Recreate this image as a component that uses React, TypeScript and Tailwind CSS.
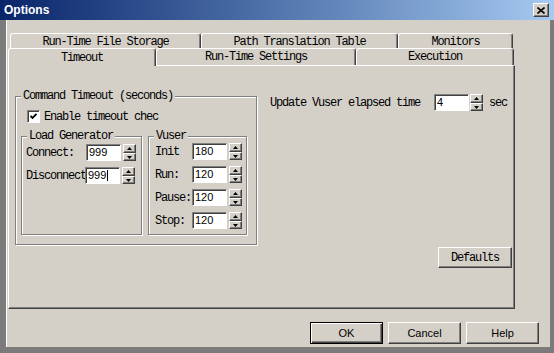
const mono = "font-[family-name:'Liberation_Mono',monospace] text-[12px] leading-[12px] tracking-[-1.2px] text-black";
const sans = "font-[family-name:'Liberation_Sans',Arial,sans-serif]";
const raised =
  "border border-t-white border-l-white border-r-[#404040] border-b-[#404040] bg-[#d4d0c8] shadow-[inset_-1px_-1px_0_#808080]";

function SpinHalf({ up }: { up?: boolean }) {
  return (
    <div className={`flex items-center justify-center ${raised} ${up ? "h-[9px]" : "h-[8px]"}`}>
      <svg width="5" height="3" viewBox="0 0 5 3">
        <path d={up ? "M2.5 0L5 3H0Z" : "M0 0H5L2.5 3Z"} fill="#000" />
      </svg>
    </div>
  );
}

function Spin() {
  return (
    <div className="flex h-[17px] w-[13px] flex-col">
      <SpinHalf up />
      <SpinHalf />
    </div>
  );
}

function Field({ value, caret }: { value: string; caret?: boolean }) {
  return (
    <div
      className={`flex h-[17px] w-[35px] items-center border border-t-[#808080] border-l-[#808080] border-r-white border-b-white bg-white pl-[2px] text-[11px] leading-[11px] text-black shadow-[inset_1px_1px_0_#404040] ${sans}`}
    >
      {value}
      {caret && <span className="ml-[1px] h-[11px] w-[1px] bg-black" />}
    </div>
  );
}

function Group({ label, className, children }: { label: string; className?: string; children?: React.ReactNode }) {
  return (
    <div className={`border border-[#808080] shadow-[inset_1px_1px_0_#fff,1px_1px_0_#fff] ${className ?? ""}`}>
      <div className={`-mt-[7px] ml-[5px] w-fit bg-[#d4d0c8] px-[2px] ${mono}`}>{label}</div>
      {children}
    </div>
  );
}

function Row({ label, labelW, value, caret, pl }: { label: string; labelW: string; value: string; caret?: boolean; pl: string }) {
  return (
    <div className={`flex h-[17px] items-center ${pl}`}>
      <div className={`overflow-hidden whitespace-nowrap ${labelW} ${mono}`}>{label}</div>
      <Field value={value} caret={caret} />
      <div className="ml-[2px]">
        <Spin />
      </div>
    </div>
  );
}

function Tab({ label, w, h = "h-[16px]", className }: { label: string; w: string; h?: string; className?: string }) {
  return (
    <div
      className={`flex items-center justify-center rounded-t-[3px] border-t border-l border-r border-t-white border-l-white border-r-[#404040] shadow-[inset_-1px_0_0_#808080] ${w} ${h} ${className ?? ""}`}
    >
      <span className={mono}>{label}</span>
    </div>
  );
}

function Button({ label, primary }: { label: string; primary?: boolean }) {
  return (
    <div
      className={`flex h-[22px] w-[73px] items-center justify-center text-[11px] text-black ${sans} ${
        primary
          ? "border border-black bg-[#d4d0c8] shadow-[inset_1px_1px_0_#fff,inset_-1px_-1px_0_#404040,inset_-2px_-2px_0_#808080]"
          : raised
      }`}
    >
      {label}
    </div>
  );
}

export default function App() {
  return (
    <div className="flex h-[353px] w-[554px] flex-col overflow-hidden bg-[#7b7b7b]">
      {/* title bar */}
      <div className="flex h-[20px] shrink-0 items-center justify-between bg-linear-to-r from-[#0a246a] to-[#a6caf0] pl-[4px] pr-[5px]">
        <span className={`text-[12px] font-bold text-white ${sans}`}>Options</span>
        <div className={`flex h-[14px] w-[16px] items-center justify-center ${raised}`}>
          <svg width="8" height="7" viewBox="0 0 8 7">
            <path d="M0.5 0.5L7.5 6.5M7.5 0.5L0.5 6.5" stroke="#000" strokeWidth="1.6" />
          </svg>
        </div>
      </div>

      <div className="mb-[6px] ml-[6px] mr-[4px] flex flex-1 flex-col border-l border-white bg-[#d4d0c8] pt-[12px]">
        <div className="ml-[1px] flex flex-col">
          {/* back tab row */}
          <div className="ml-[2px] flex h-[16px] pt-[1px]">
            <Tab label="Run-Time File Storage" w="w-[191px]" />
            <Tab label="Path Translation Table" w="w-[197px]" />
            <Tab label="Monitors" w="w-[115px]" />
          </div>
          {/* front tab row */}
          <div className="flex h-[17px] items-start">
            <Tab label="Timeout" w="w-[148px]" h="h-[18px]" className="relative z-10 -mb-[1px] bg-[#d4d0c8]" />
            <Tab label="Run-Time Settings" w="w-[200px]" h="h-[17px]" />
            <Tab label="Execution" w="w-[158px]" h="h-[17px]" />
          </div>

          {/* panel */}
          <div className="flex h-[244px] w-[507px] border border-t-white border-l-white border-r-[#404040] border-b-[#404040] shadow-[inset_-1px_-1px_0_#808080]">
            <Group label="Command Timeout (seconds)" className="ml-[6px] mt-[30px] h-fit w-[242px] pb-[9px]">
              <div className="ml-[11px] mt-[8px] flex h-[13px] items-center">
                <div className="flex h-[13px] w-[13px] items-center justify-center border border-t-[#808080] border-l-[#808080] border-r-white border-b-white bg-white shadow-[inset_1px_1px_0_#404040]">
                  <svg width="7" height="7" viewBox="0 0 7 7">
                    <path d="M0.5 3L2.5 5L6.5 1" stroke="#000" strokeWidth="1.8" fill="none" />
                  </svg>
                </div>
                <span className={`ml-[4px] ${mono}`}>Enable timeout chec</span>
              </div>
              <div className="ml-[5px] mt-[13px] flex gap-[6px]">
                <Group label="Load Generator" className="h-[99px] w-[121px]">
                  <div className="mt-[2px] flex flex-col gap-[6px]">
                    <Row label="Connect:" labelW="w-[60px]" value="999" pl="pl-[4px]" />
                    <Row label="Disconnect" labelW="w-[59px]" value="999" caret pl="pl-[4px]" />
                  </div>
                </Group>
                <Group label="Vuser" className="h-[99px] w-[99px]">
                  <div className="mt-[1px] flex flex-col gap-[6px]">
                    <Row label="Init" labelW="w-[37px]" value="180" pl="pl-[6px]" />
                    <Row label="Run:" labelW="w-[37px]" value="120" pl="pl-[6px]" />
                    <Row label="Pause:" labelW="w-[37px]" value="120" pl="pl-[6px]" />
                    <Row label="Stop:" labelW="w-[37px]" value="120" pl="pl-[6px]" />
                  </div>
                </Group>
              </div>
            </Group>

            <div className="ml-[13px] mt-[28px] flex flex-1 flex-col">
              <div className="flex h-[17px] items-center">
                <span className={`w-[164px] whitespace-nowrap ${mono}`}>Update Vuser elapsed time</span>
                <Field value="4" />
                <div className="ml-[1px]">
                  <Spin />
                </div>
                <span className={`ml-[6px] ${mono}`}>sec</span>
              </div>
              <div className={`mr-[2px] mt-[136px] flex h-[21px] w-[74px] items-center justify-center self-end ${raised}`}>
                <span className={mono}>Defaults</span>
              </div>
            </div>
          </div>
        </div>

        <div className="mt-[13px] flex justify-end gap-[5px] pr-[11px]">
          <Button label="OK" primary />
          <Button label="Cancel" />
          <Button label="Help" />
        </div>
      </div>
    </div>
  );
}
